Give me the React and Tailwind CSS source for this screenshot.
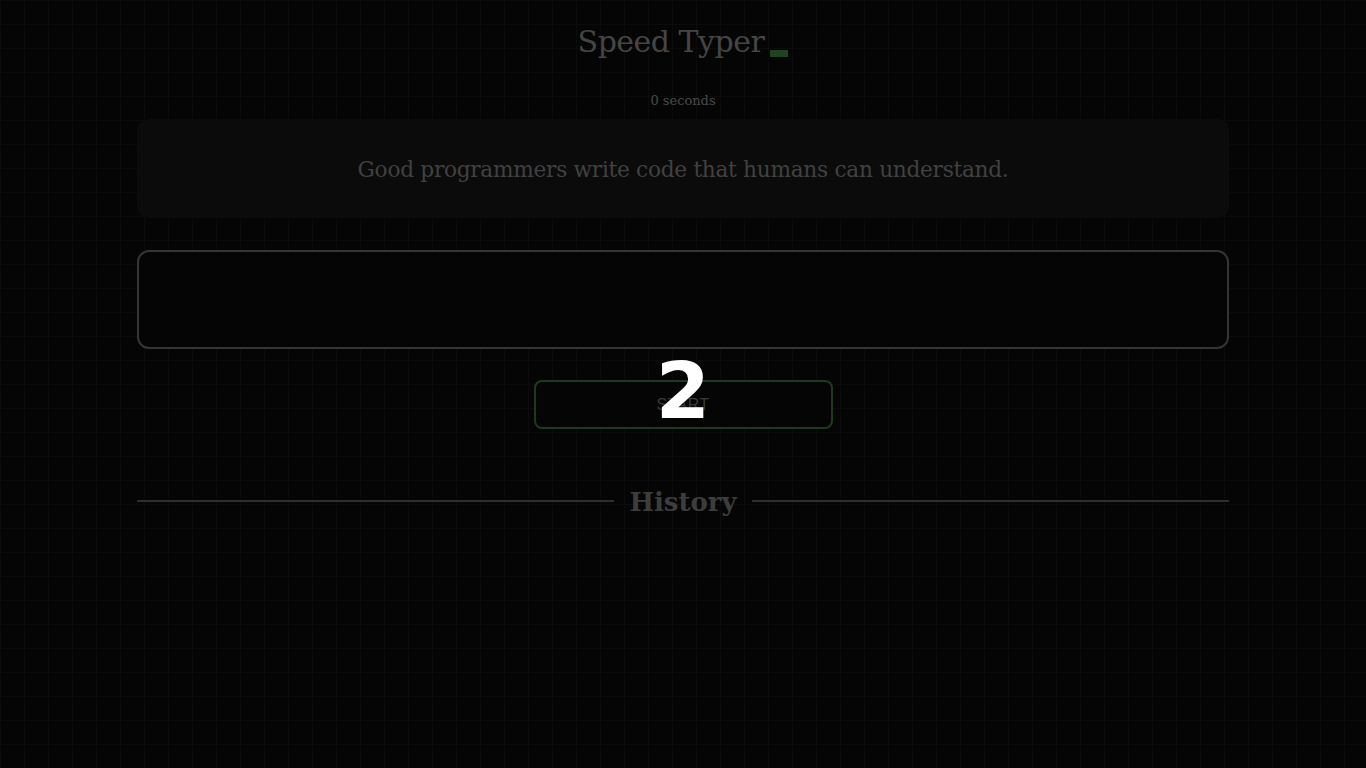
import React from 'react';

const slab = { fontFamily: '"DejaVu Serif", "Liberation Serif", serif' };

export default function App() {
    return (
        <div
            className="min-h-screen w-full bg-[#050505] bg-[linear-gradient(to_right,#0b0b0b_1px,transparent_1px),linear-gradient(to_bottom,#0b0b0b_1px,transparent_1px)] bg-[size:24px_24px]"
            style={slab}
        >
            <div className="mx-auto w-[1092px] flex flex-col items-center pt-[20px]">
                <h1 className="flex items-end text-[30px] leading-[44px] text-[#454545] tracking-[-0.5px]">
                    Speed Typer
                    <span className="ml-[6px] mb-[7px] w-[18px] h-[7px] bg-[#1f4424]" />
                </h1>

                <p className="mt-[28px] text-[13px] leading-[18px] text-[#4a4a4a]">0 seconds</p>

                <div className="mt-[9px] w-full h-[99px] rounded-xl bg-[#0b0b0b] flex items-center justify-center">
                    <p className="text-[21.7px] text-[#414141] tracking-[-0.3px] pt-[4px]">
                        Good programmers write code that humans can understand.
                    </p>
                </div>

                <textarea
                    className="mt-[32px] w-full h-[99px] rounded-xl border-2 border-[#353535] bg-[#050505] resize-none outline-none"
                    readOnly
                />

                <div className="relative mt-[31px]">
                    <button className="w-[299px] h-[49px] rounded-lg border-2 border-[#1d3a1f] bg-[#050505] text-[#3a3a3a] text-[16px] tracking-wide" style={{ fontFamily: '"Liberation Sans", Arial, sans-serif' }}>
                        START
                    </button>
                    <span
                        className="absolute left-1/2 -translate-x-1/2 top-[-28px] text-[78px] leading-none font-black text-white"
                        style={{ fontFamily: '"DejaVu Sans", "Liberation Sans", sans-serif' }}
                    >
                        2
                    </span>
                </div>

                <div className="mt-[51px] w-full flex items-center gap-[15px]">
                    <div className="flex-1 h-[2px] bg-[#2e2e2e]" />
                    <h2 className="text-[26px] font-bold text-[#3d3d3d] leading-[40px] pt-[2px]">History</h2>
                    <div className="flex-1 h-[2px] bg-[#2e2e2e]" />
                </div>
            </div>
        </div>
    );
}
